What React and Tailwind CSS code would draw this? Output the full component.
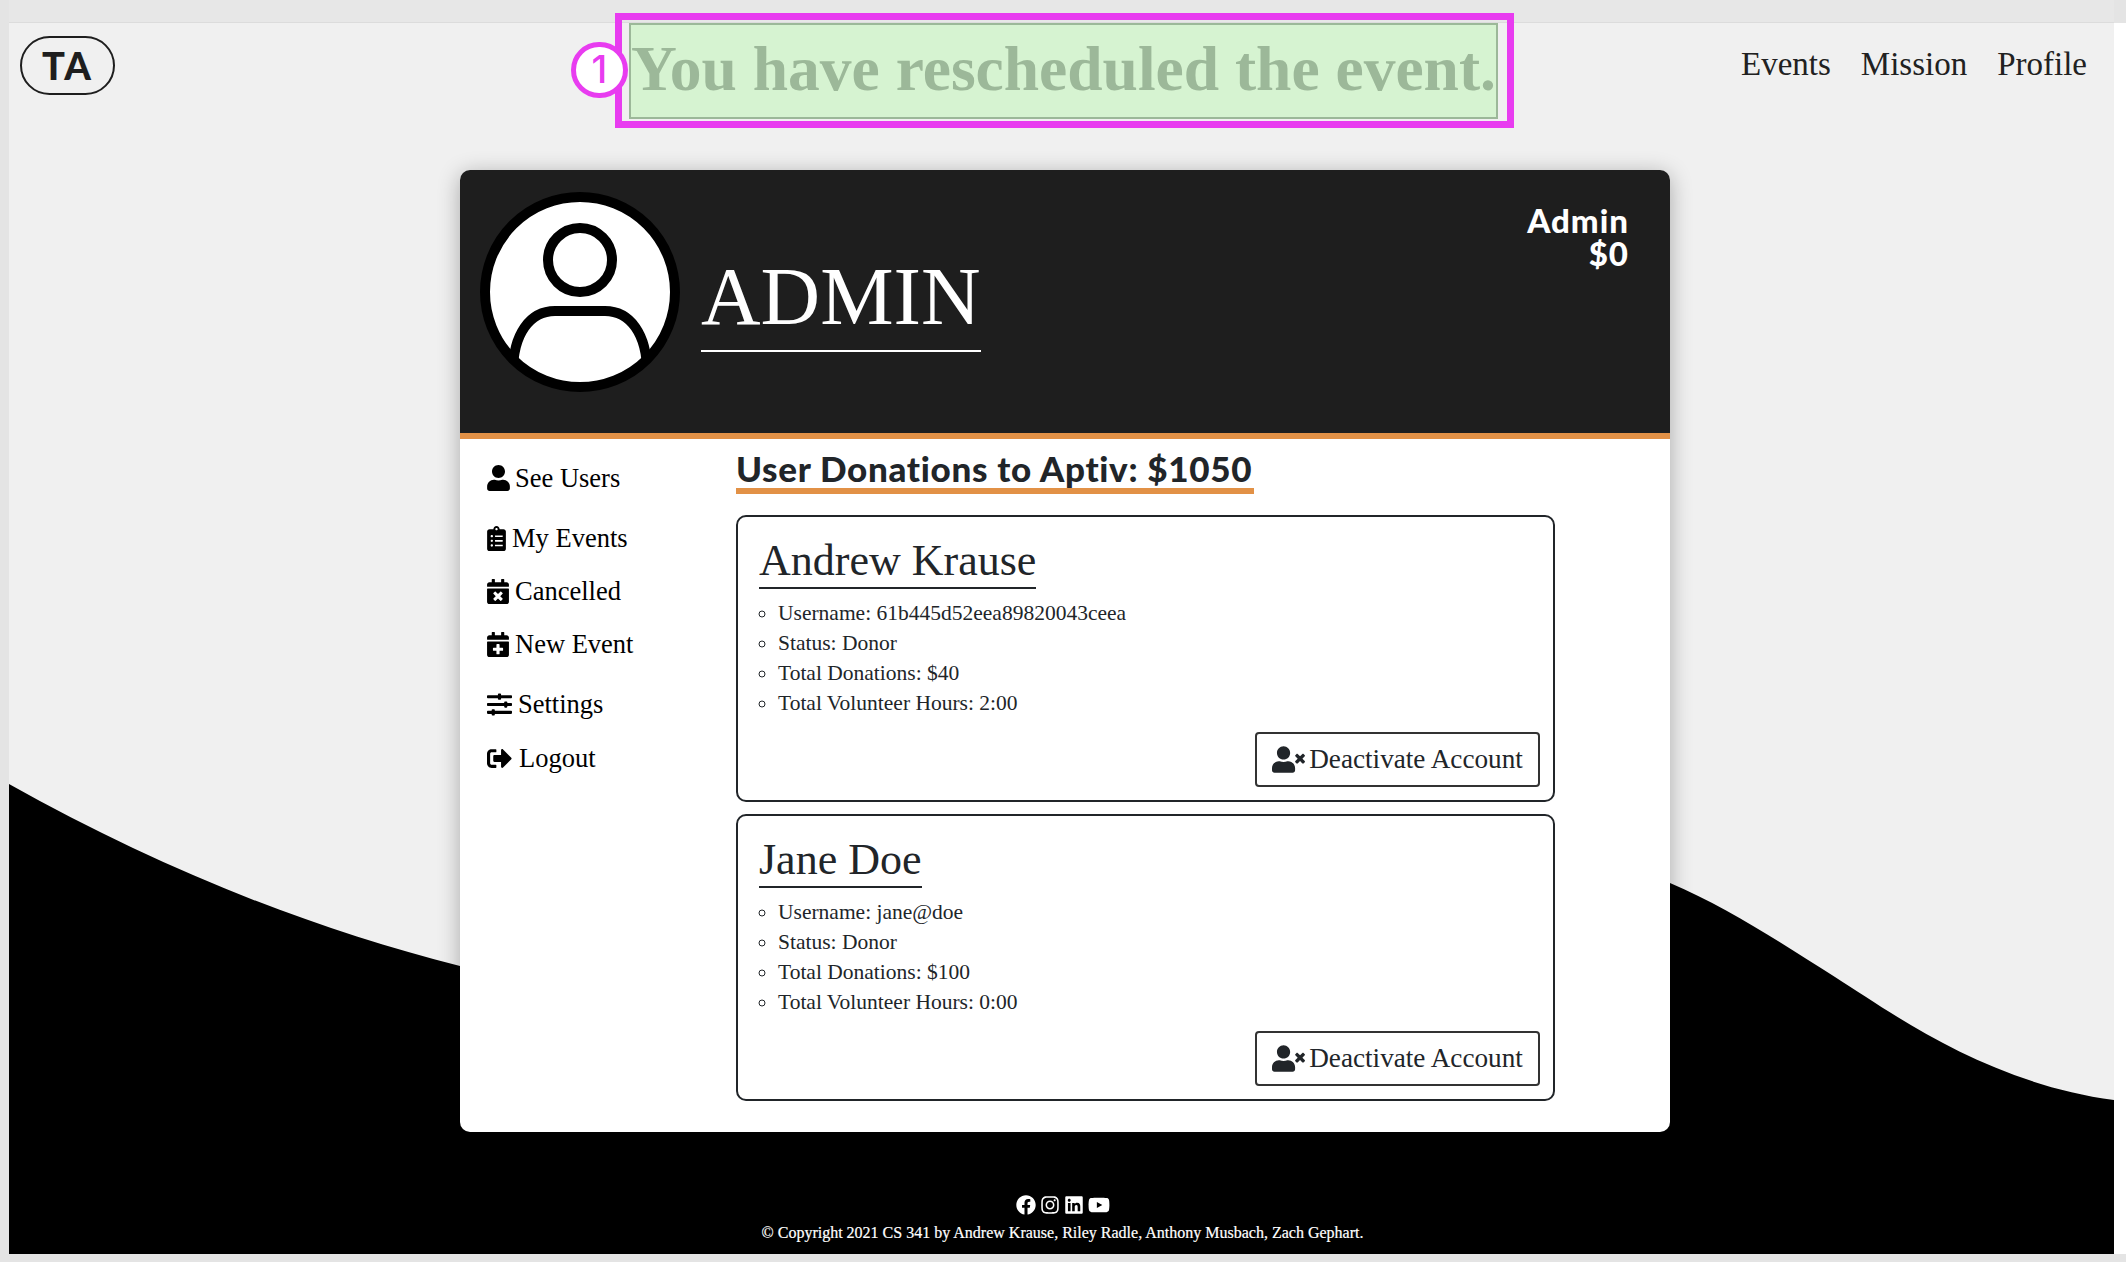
import React from 'react';
import {
  FaUser,
  FaClipboardList,
  FaCalendarTimes,
  FaCalendarPlus,
  FaSlidersH,
  FaSignOutAlt,
  FaUserTimes,
  FaFacebook,
  FaInstagram,
  FaLinkedin,
  FaYoutube,
} from 'react-icons/fa';

const serif = "font-['Liberation_Serif',serif]";
const hand = "font-['Lato',sans-serif]";

const links = [
  { label: 'See Users', icon: FaUser, mt: 'mt-[23px]', gap: 'gap-[5px]', iconSize: 'w-[23px] h-[26px]' },
  { label: 'My Events', icon: FaClipboardList, mt: 'mt-[28px]', gap: 'gap-[6px]', iconSize: 'w-[19px] h-[25px]' },
  { label: 'Cancelled', icon: FaCalendarTimes, mt: 'mt-[21px]', gap: 'gap-[6px]', iconSize: 'w-[22px] h-[25px]' },
  { label: 'New Event', icon: FaCalendarPlus, mt: 'mt-[21px]', gap: 'gap-[6px]', iconSize: 'w-[22px] h-[25px]' },
  { label: 'Settings', icon: FaSlidersH, mt: 'mt-[28px]', gap: 'gap-[6px]', iconSize: 'w-[25px] h-[25px]' },
  { label: 'Logout', icon: FaSignOutAlt, mt: 'mt-[22px]', gap: 'gap-[7px]', iconSize: 'w-[25px] h-[25px]' },
];

const users = [
  { name: 'Andrew Krause', username: '61b445d52eea89820043ceea', donations: '$40', hours: '2:00' },
  { name: 'Jane Doe', username: 'jane@doe', donations: '$100', hours: '0:00' },
];

const UserCard = ({ user }) => (
  <div className="h-[287px] rounded-[10px] border-2 border-[#212529] pl-[21px] pr-[13px] flex flex-col text-[#212529]">
    <h2 className="self-start mt-[15px] h-[57px] border-b-2 border-[#212529] text-[44px] leading-[57px] font-normal">
      {user.name}
    </h2>
    <ul className="mt-[9px] ml-[19px] list-[circle] text-[21.5px] leading-[30px]">
      <li>Username: {user.username}</li>
      <li>Status: Donor</li>
      <li>Total Donations: {user.donations}</li>
      <li>Total Volunteer Hours: {user.hours}</li>
    </ul>
    <button className="self-end mt-auto mb-[13px] h-[55px] w-[285px] rounded-[4px] border-2 border-[#333333] flex items-center justify-center gap-[4px] text-[27.2px] text-[#212529]">
      <FaUserTimes size={33} />
      Deactivate Account
    </button>
  </div>
);

const App = () => {
  return (
    <div className={`${serif} flex w-[2126px] h-[1262px] overflow-hidden bg-[#e4e4e4]`}>
      <div className="w-[9px] shrink-0" />
      <div className="w-[2105px] shrink-0 flex flex-col">
        <div className="h-[23px] shrink-0 bg-[#e7e7e7] border-b border-[#dcdcdc]" />
        <main className="relative h-[1231px] bg-[#f0f0f0]">
          <svg className="absolute left-0 top-0" width="2105" height="1231" viewBox="0 0 2105 1231">
            <path
              d="M0 761 C 150 845, 300 905, 451 943 C 800 1030, 1150 660, 1661 860 C 1720 885, 1780 925, 1826 954 C 1890 995, 1980 1060, 2105 1077 L 2105 1231 L 0 1231 Z"
              fill="#000000"
            />
          </svg>

          <div className="relative flex flex-col h-full">
            <nav className="flex items-start h-[147px]">
              <div className="mt-[13px] ml-[11px] w-[95px] h-[59px] rounded-[30px] border-2 border-[#1e1e1e] flex items-center justify-center text-[38px] font-black text-[#1e1e1e] font-['Lato',sans-serif] tracking-[2px]">
                TA
              </div>
              <div className="relative ml-[514px] w-[869px] h-[96px] border-2 border-[#9cb899] bg-[#d6f3d1] text-center text-[63.5px] leading-[88px] text-[#9cb899] font-bold whitespace-nowrap">
                You have rescheduled the event.
                <div className="absolute -left-[16px] -right-[18px] -top-[12px] -bottom-[11px] border-[7px] border-[#e83cf0]" />
                <div className="absolute -left-[60px] top-[17px] w-[57px] h-[56px] rounded-full border-[5px] border-[#e83cf0] bg-white text-[#e83cf0] text-[38px] leading-[44px] text-center font-['Inter',sans-serif] font-medium">
                  1
                </div>
              </div>
              <div className="ml-auto mr-[27px] mt-[21px] flex gap-[30px] text-[33px] leading-[40px] text-[#212121]">
                <span>Events</span>
                <span>Mission</span>
                <span>Profile</span>
              </div>
            </nav>

            <section className="ml-[451px] w-[1210px] h-[962px] rounded-[10px] bg-white overflow-hidden shadow-[0_4px_22px_rgba(0,0,0,0.3)]">
              <header className="h-[269px] bg-[#1e1e1e] border-b-[6px] border-[#e29146] flex items-start">
                <svg className="ml-[20px] mt-[21px] shrink-0" width="200" height="202" viewBox="0 0 200 200">
                  <defs>
                    <clipPath id="avatar-clip">
                      <circle cx="100" cy="100" r="96" />
                    </clipPath>
                  </defs>
                  <circle cx="100" cy="100" r="96" fill="#ffffff" />
                  <circle cx="100" cy="68" r="32" fill="none" stroke="#000000" strokeWidth="10" />
                  <path
                    d="M33 180 C 33 142, 50 119, 75 119 H 125 C 150 119, 167 142, 167 180"
                    fill="none"
                    stroke="#000000"
                    strokeWidth="10"
                    clipPath="url(#avatar-clip)"
                  />
                  <circle cx="100" cy="100" r="95" fill="none" stroke="#000000" strokeWidth="10" />
                </svg>
                <div className="ml-[21px] mt-[76px] h-[106px] border-b-2 border-white text-[82.5px] leading-[100px] text-white whitespace-nowrap">
                  ADMIN
                </div>
                <div className={`${hand} ml-auto mr-[41px] mt-[34px] text-right text-[33px] leading-[33px] tracking-[1px] font-black text-white`}>
                  <div>Admin</div>
                  <div>$0</div>
                </div>
              </header>

              <div className="flex">
                <aside className="w-[276px] shrink-0 pl-[27px] text-[#000000]">
                  {links.map((link) => {
                    const Icon = link.icon;
                    return (
                      <div
                        key={link.label}
                        className={`${link.mt} ${link.gap} h-[32px] flex items-center text-[26.5px] leading-[32px] whitespace-nowrap`}
                      >
                        <Icon className={link.iconSize} />
                        {link.label}
                      </div>
                    );
                  })}
                </aside>
                <div className="w-[819px] shrink-0">
                  <h1 className={`${hand} mt-[9px] h-[46px] w-[518px] border-b-[6px] border-[#e29146] text-[35px] leading-[40px] tracking-[0.7px] font-black text-[#212529] whitespace-nowrap`}>
                    User Donations to Aptiv: $1050
                  </h1>
                  <div className="mt-[21px] flex flex-col gap-[12px]">
                    {users.map((user) => (
                      <UserCard key={user.name} user={user} />
                    ))}
                  </div>
                </div>
              </div>
            </section>

            <footer className="flex flex-col items-center text-white">
              <div className="mt-[62px] ml-[2px] flex items-center gap-[4px]">
                <FaFacebook size={20} />
                <FaInstagram size={20} />
                <FaLinkedin size={20} />
                <FaYoutube size={22} />
              </div>
              <p className="mt-[6px] ml-[2px] text-[16px] leading-[22px] [-webkit-text-stroke:0.2px_white]">
                © Copyright 2021 CS 341 by Andrew Krause, Riley Radle, Anthony Musbach, Zach Gephart.
              </p>
            </footer>
          </div>
        </main>
      </div>
      <div className="flex-1 flex flex-col">
        <div className="mt-[23px] h-[1231px] bg-white" />
      </div>
    </div>
  );
};

export default App;
